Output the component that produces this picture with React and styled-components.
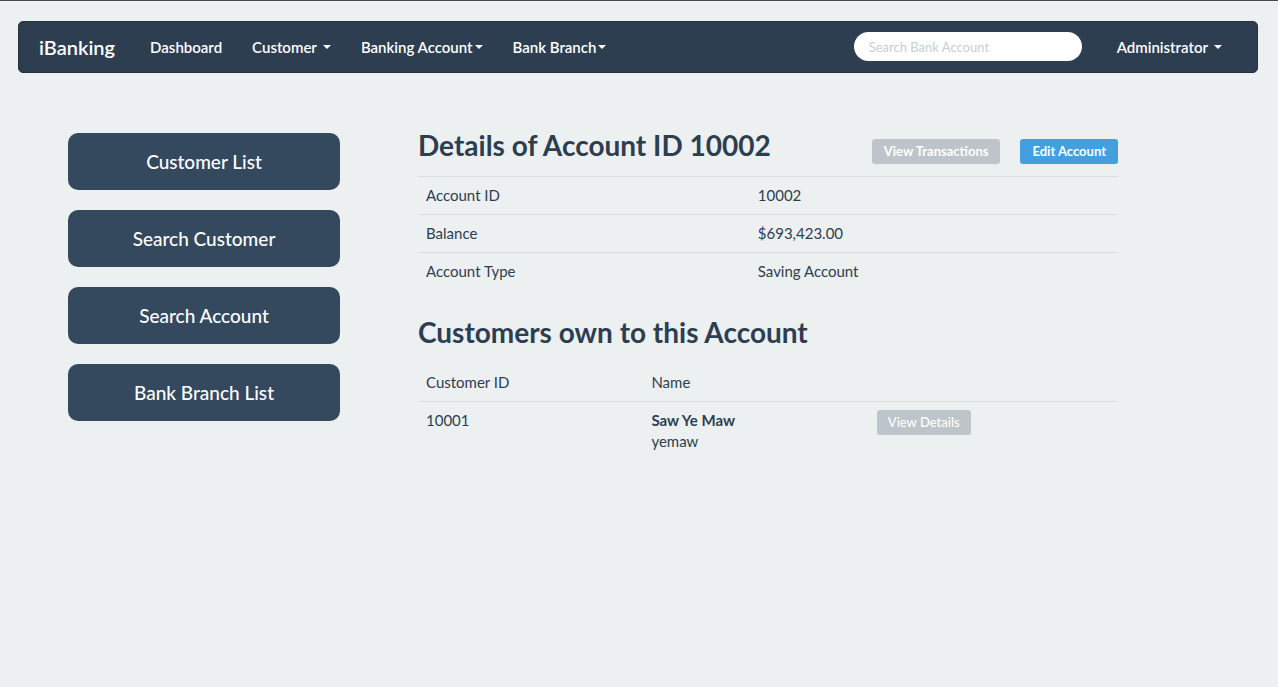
import React from "react";
import styled, { createGlobalStyle } from "styled-components";

const GlobalStyle = createGlobalStyle`
  *, *::before, *::after { box-sizing: border-box; }
  body {
    margin: 0;
    min-height: 100vh;
    border-top: 1px solid #4a4a4c;
    background: #ecf0f1;
    color: #2c3e50;
    font-family: Lato, "Liberation Sans", sans-serif;
    font-size: 15px;
    line-height: 21px;
  }
  button, input { font-family: inherit; }
`;

const Navbar = styled.header`
  display: flex;
  align-items: center;
  height: 52px;
  margin: 20px 20px 0 18px;
  padding: 0 20px;
  border: 1px solid #233140;
  border-radius: 5px;
  background: #2d3e50;
`;

const Brand = styled.a`
  margin-right: 35px;
  color: #fff;
  font-size: 20px;
  font-weight: 600;
  text-decoration: none;
`;

const Nav = styled.nav`
  display: flex;
  flex: 1;
  gap: 30px;
`;

const NavLink = styled.a`
  color: #fff;
  font-weight: 600;
  text-decoration: none;
`;

const NavButton = styled.button`
  display: flex;
  align-items: center;
  gap: ${(p) => (p.$tight ? 2 : 6)}px;
  padding: 0;
  border: 0;
  background: none;
  color: #fff;
  font-size: 15px;
  font-weight: 600;
  line-height: 21px;
  white-space: nowrap;

  &::after {
    content: "";
    border: 4px solid transparent;
    border-top-color: #fff;
    border-bottom: 0;
  }
`;

const SearchInput = styled.input`
  width: 228px;
  height: 29px;
  margin: 0 35px 2px 0;
  padding: 2px 15px 0;
  border: 0;
  border-radius: 15px;
  background: #fff;
  color: #2c3e50;
  font-size: 13px;

  &::placeholder { color: #c6cfd1; opacity: 1; }
`;

const UserMenu = styled.div`
  margin-right: 15px;
`;

const Page = styled.div`
  display: flex;
  align-items: flex-start;
  gap: 78px;
  padding: 60px 160px 0 68px;
`;

const Sidebar = styled.nav`
  display: flex;
  flex: 272 1 0;
  flex-direction: column;
  gap: 20px;
`;

const SideLink = styled.a`
  padding: 18px 16px;
  border-radius: 10px;
  background: #34495e;
  color: #fff;
  font-size: 19px;
  font-weight: 500;
  text-align: center;
  text-decoration: none;
`;

const Content = styled.main`
  flex: 700 1 0;
`;

const TitleRow = styled.div`
  display: flex;
  align-items: flex-start;
  justify-content: space-between;
  padding-bottom: 12px;
`;

const Title = styled.h1`
  margin: 0;
  font-size: 28px;
  font-weight: 700;
  line-height: 24px;
`;

const Actions = styled.div`
  display: flex;
  gap: 20px;
  padding-top: 6px;
`;

const Subtitle = styled.h2`
  margin: 26px 0 15px;
  font-size: 28px;
  font-weight: 700;
  line-height: 32px;
`;

const Button = styled.button`
  height: 25px;
  padding: 0 ${(p) => (p.$bold ? 12 : 11)}px;
  border: 0;
  border-radius: 3px;
  background: ${(p) => (p.$primary ? "#449fde" : "#bdc4ca")};
  color: #fff;
  font-size: 13px;
  font-weight: ${(p) => (p.$bold ? 700 : 500)};
  line-height: 21px;
`;

const Table = styled.table`
  width: 100%;
  border-collapse: separate;
  border-spacing: 0;
  table-layout: fixed;
`;

const Row = styled.tr`
  & > * {
    padding: 8px;
    border-top: 1px solid ${(p) => (p.$plain ? "transparent" : "#d9dbdd")};
    font-weight: 400;
    text-align: left;
    vertical-align: top;
  }
`;

const HeadCell = styled.th`
  width: ${(p) => p.$width};
`;

const Name = styled.strong`
  display: block;
  font-weight: 700;
`;

const details = [
  ["Account ID", "10002"],
  ["Balance", "$693,423.00"],
  ["Account Type", "Saving Account"],
];

const links = ["Customer List", "Search Customer", "Search Account", "Bank Branch List"];

export default function App() {
  return (
    <>
      <GlobalStyle />
      <Navbar>
        <Brand href="#">iBanking</Brand>
        <Nav>
          <NavLink href="#">Dashboard</NavLink>
          <NavButton>Customer</NavButton>
          <NavButton $tight>Banking Account</NavButton>
          <NavButton $tight>Bank Branch</NavButton>
        </Nav>
        <SearchInput type="search" placeholder="Search Bank Account" aria-label="Search Bank Account" />
        <UserMenu>
          <NavButton>Administrator</NavButton>
        </UserMenu>
      </Navbar>
      <Page>
        <Sidebar>
          {links.map((label) => (
            <SideLink href="#" key={label}>{label}</SideLink>
          ))}
        </Sidebar>
        <Content>
          <TitleRow>
            <Title>Details of Account ID 10002</Title>
            <Actions>
              <Button $bold>View Transactions</Button>
              <Button $bold $primary>Edit Account</Button>
            </Actions>
          </TitleRow>
          <Table>
            <tbody>
              {details.map(([label, value]) => (
                <Row key={label}>
                  <HeadCell scope="row" $width="47.4%">{label}</HeadCell>
                  <td>{value}</td>
                </Row>
              ))}
            </tbody>
          </Table>
          <Subtitle>Customers own to this Account</Subtitle>
          <Table>
            <thead>
              <Row $plain>
                <HeadCell scope="col" $width="32.2%">Customer ID</HeadCell>
                <HeadCell scope="col" $width="32.2%">Name</HeadCell>
                <td />
              </Row>
            </thead>
            <tbody>
              <Row>
                <td>10001</td>
                <td>
                  <Name>Saw Ye Maw</Name>
                  yemaw
                </td>
                <td>
                  <Button>View Details</Button>
                </td>
              </Row>
            </tbody>
          </Table>
        </Content>
      </Page>
    </>
  );
}
